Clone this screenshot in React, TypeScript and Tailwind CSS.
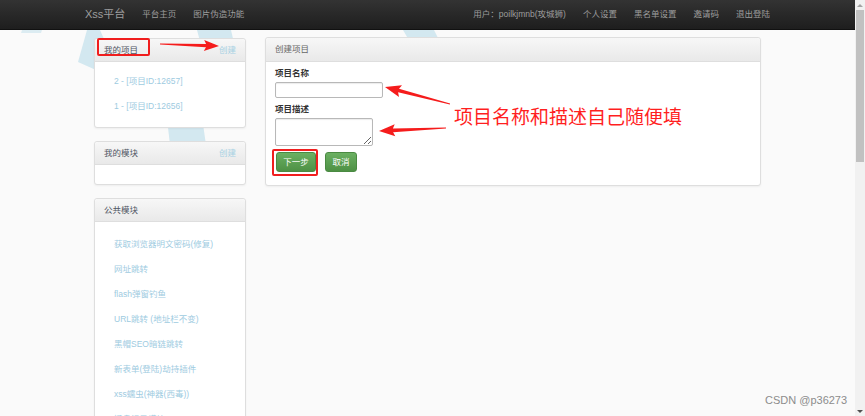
import React from "react";

type Pt = [number, number];

function arrowPoints(
  x1: number,
  y1: number,
  x2: number,
  y2: number,
  headLen = 13,
  headW = 5.5,
  s0 = 0.4,
  s1 = 1.6
): string {
  const dx = x2 - x1;
  const dy = y2 - y1;
  const len = Math.hypot(dx, dy);
  const ux = dx / len;
  const uy = dy / len;
  const nx = -uy;
  const ny = ux;
  const bx = x2 - ux * headLen;
  const by = y2 - uy * headLen;
  const pts: Pt[] = [
    [x1 + nx * s0, y1 + ny * s0],
    [bx + nx * s1, by + ny * s1],
    [bx - ux * 2 + nx * headW, by - uy * 2 + ny * headW],
    [x2, y2],
    [bx - ux * 2 - nx * headW, by - uy * 2 - ny * headW],
    [bx - nx * s1, by - ny * s1],
    [x1 - nx * s0, y1 - ny * s0],
  ];
  return pts.map((p) => `${p[0].toFixed(1)},${p[1].toFixed(1)}`).join(" ");
}

function Panel({
  title,
  action,
  children,
  titleClass = "text-[#4f5563]",
  headerH = "h-[22px]",
  className = "",
}: {
  title: string;
  action?: string;
  children?: React.ReactNode;
  titleClass?: string;
  headerH?: string;
  className?: string;
}) {
  return (
    <div
      className={`border border-[#dedede] rounded-[3px] bg-white shadow-[0_1px_2px_rgba(0,0,0,0.05)] ${className}`}
    >
      <div
        className={`${headerH} px-[9px] flex items-center justify-between bg-linear-to-b from-[#f7f7f7] to-[#e9e9e9] border-b border-[#dedede] box-content rounded-t-[3px]`}
      >
        <span className={`text-[8.5px] ${titleClass}`}>{title}</span>
        {action && <span className="text-[8.5px] text-[#a6d1e3]">{action}</span>}
      </div>
      {children}
    </div>
  );
}

export default function App() {
  const publicModules = [
    "获取浏览器明文密码(修复)",
    "网址跳转",
    "flash弹窗钓鱼",
    "URL跳转 (地址栏不变)",
    "黑帽SEO暗链跳转",
    "新表单(登陆)劫持插件",
    "xss蠕虫(神器(西毒))",
    "键盘记录模块",
  ];

  return (
    <div className="relative w-[865px] h-[416px] overflow-hidden bg-[#fafafa] font-['Liberation_Sans','Noto_Sans_CJK_SC',sans-serif] flex">
      {/* background watermark shapes */}
      <svg
        className="absolute left-0 top-0 pointer-events-none"
        width="855"
        height="416"
        viewBox="0 0 855 416"
      >
        <polygon points="87,30 100,30 124,84 96,70 78,62" fill="#d3e8f0" />
        <polygon points="197,30 231,30 238,60 205,60" fill="#d3e8f0" />
        <polygon points="166,110 201,110 206,145 170,145" fill="#d3e8f0" />
        <polygon points="403,30 434,30 440,42 410,42" fill="#d3e8f0" />
        <polygon points="22,30 42,30 41,33 21,33" fill="#dcecf2" />
      </svg>

      <div className="relative flex-1 flex flex-col">
        {/* navbar */}
        <div className="h-[30px] shrink-0 bg-linear-to-b from-[#333333] to-[#1e1e1e] border-b border-[#111] px-[85px] flex items-center justify-between">
          <div className="flex items-center gap-[17px]">
            <span className="text-[11px] text-[#9d9d9d]">Xss平台</span>
            <span className="text-[8.5px] text-[#9d9d9d]">平台主页</span>
            <span className="text-[8.5px] text-[#9d9d9d]">图片伪造功能</span>
          </div>
          <div className="flex items-center gap-[17px] text-[8.5px] text-[#9d9d9d]">
            <span>用户：poilkjmnb(攻城狮)</span>
            <span>个人设置</span>
            <span>黑名单设置</span>
            <span>邀请码</span>
            <span>退出登陆</span>
          </div>
        </div>

        {/* content */}
        <div className="flex items-start pl-[94px] gap-[19px]">
          {/* left column */}
          <div className="w-[152px] pt-[8px] flex flex-col gap-[13px]">
            <Panel title="我的项目" action="创建">
              <div className="pt-[7px] pb-[8px] pl-[19px]">
                <div className="h-[25px] flex items-center text-[8.5px] text-[#9ecbdf]">
                  2 - [项目ID:12657]
                </div>
                <div className="h-[25px] flex items-center text-[8.5px] text-[#9ecbdf]">
                  1 - [项目ID:12656]
                </div>
              </div>
            </Panel>
            <Panel title="我的模块" action="创建">
              <div className="h-[19px]" />
            </Panel>
            <Panel title="公共模块">
              <div className="pt-[10px] pb-[10px] pl-[19px]">
                {publicModules.map((m) => (
                  <div
                    key={m}
                    className="h-[25px] flex items-center text-[8.5px] text-[#9ecbdf]"
                  >
                    {m}
                  </div>
                ))}
              </div>
            </Panel>
          </div>

          {/* right panel */}
          <div className="w-[496px] mt-[7px]">
            <Panel title="创建项目" titleClass="text-[#666]" headerH="h-[23px]">
              <div className="px-[9px] pt-[5px] pb-[13px] flex flex-col">
                <div className="h-[13px] flex items-center text-[8.5px] font-bold text-[#333]">
                  项目名称
                </div>
                <input
                  type="text"
                  className="mt-[2px] w-[108px] h-[16px] border border-[#b8b8b8] rounded-[2px] bg-white shadow-[inset_0_1px_1px_rgba(0,0,0,0.08)] outline-none"
                />
                <div className="mt-[5px] h-[13px] flex items-center text-[8.5px] font-bold text-[#333]">
                  项目描述
                </div>
                <textarea className="mt-[2px] w-[98px] h-[28px] border border-[#b8b8b8] rounded-[2px] bg-white shadow-[inset_0_1px_1px_rgba(0,0,0,0.08)] outline-none block" />
                <div className="mt-[6px] flex items-center gap-[9px] pl-[1px]">
                  <button className="w-[40px] h-[20px] rounded-[3px] border border-[#4a8a42] bg-linear-to-b from-[#6bb062] to-[#4e9145] text-white text-[8.5px] flex items-center justify-center">
                    下一步
                  </button>
                  <button className="w-[32px] h-[20px] rounded-[3px] border border-[#4a8a42] bg-linear-to-b from-[#6bb062] to-[#4e9145] text-white text-[8.5px] flex items-center justify-center">
                    取消
                  </button>
                </div>
              </div>
            </Panel>
          </div>
        </div>
      </div>

      {/* scrollbar */}
      <div className="relative w-[10px] h-full bg-[#f1f1f1] shrink-0 flex flex-col items-center">
        <div className="h-[10px] w-full flex items-center justify-center">
          <div className="w-0 h-0 border-l-[3px] border-r-[3px] border-b-[3px] border-l-transparent border-r-transparent border-b-[#a3a3a3]" />
        </div>
        <div className="w-[8px] h-[152px] bg-[#c1c1c1]" />
        <div className="flex-1" />
        <div className="h-[10px] w-full flex items-center justify-center">
          <div className="w-0 h-0 border-l-[3px] border-r-[3px] border-t-[3px] border-l-transparent border-r-transparent border-t-[#505050]" />
        </div>
      </div>

      {/* annotation overlays */}
      <div className="absolute left-[97px] top-[38px] w-[53px] h-[18px] border-2 border-[#f01e1e] rounded-[2px] pointer-events-none" />
      <div className="absolute left-[272px] top-[149px] w-[46px] h-[27px] border-2 border-[#f01e1e] rounded-[2px] pointer-events-none" />
      <svg
        className="absolute left-0 top-0 pointer-events-none"
        width="865"
        height="416"
        viewBox="0 0 865 416"
      >
        <polygon points={arrowPoints(160, 44, 219, 46)} fill="#f51c1c" />
        <polygon points={arrowPoints(450, 104, 385, 87, 14, 6, 0.4, 1.8)} fill="#f51c1c" />
        <polygon points={arrowPoints(446, 128, 379, 131, 14, 6, 0.4, 1.8)} fill="#f51c1c" />
      </svg>
      <div className="absolute left-[454px] top-[104px] text-[19px] leading-[24px] text-[#ff1f1f] font-['Noto_Sans_CJK_SC',sans-serif] whitespace-nowrap pointer-events-none">
        项目名称和描述自己随便填
      </div>
      <div className="absolute left-[765px] top-[392px] text-[11px] leading-[16px] text-[#8c8c8c] font-['Liberation_Sans',sans-serif] whitespace-nowrap pointer-events-none">
        CSDN @p36273
      </div>
    </div>
  );
}
